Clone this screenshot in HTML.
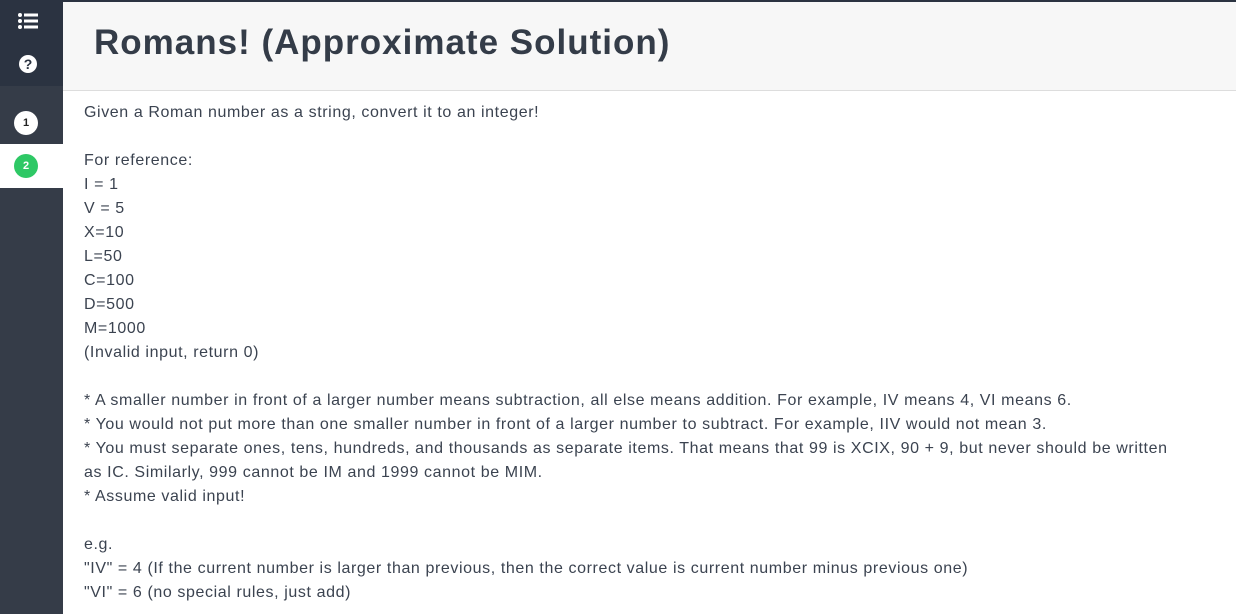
<!DOCTYPE html>
<html><head><style>
body{margin:0;width:1236px;height:614px;overflow:hidden;background:#fff;font-family:"Liberation Sans",sans-serif;position:relative}
.sb{position:absolute;left:0;top:0;width:63px;height:614px;background:#353c48}
.top{position:absolute;left:0;top:0;width:63px;height:86px;background:#2b3341}
.sel{position:absolute;left:0;top:144px;width:63px;height:44px;background:#fff}
.c{position:absolute;border-radius:50%;text-align:center;font-weight:bold}
.hdr{position:absolute;left:63px;top:0;right:0;height:91px;background:#f7f7f7;border-top:2px solid #2b3341;border-bottom:1px solid #ddd;box-sizing:border-box}
h1{margin:0;position:absolute;left:31px;top:21px;font-size:35px;color:#343c48;font-weight:bold;letter-spacing:1px}
.txt{position:absolute;left:84px;top:101px;font-size:16px;line-height:24px;color:#3b4350;white-space:pre-wrap;width:1100px;letter-spacing:0.6px}
</style></head><body>
<div class="sb"></div><div class="top"></div><div class="sel"></div>
<svg style="position:absolute;left:18px;top:12px" width="22" height="18" viewBox="0 0 22 18" fill="#fff"><circle cx="2" cy="3" r="2"/><circle cx="2" cy="9" r="2"/><circle cx="2" cy="15" r="2"/><rect x="6" y="1.5" width="14" height="3"/><rect x="6" y="7.5" width="14" height="3"/><rect x="6" y="13.5" width="14" height="3"/></svg>
<div class="c" style="left:19px;top:55px;width:18px;height:18px;background:#fff;color:#2b3341;font-size:14px;line-height:18px">?</div>
<div class="c" style="left:14px;top:111px;width:24px;height:24px;background:#fff;color:#222;font-size:11px;line-height:24px">1</div>
<div class="c" style="left:14px;top:154px;width:24px;height:24px;background:#2ec865;color:#fff;font-size:11px;line-height:24px">2</div>
<div class="hdr"><h1>Romans! (Approximate Solution)</h1></div>
<div class="txt">Given a Roman number as a string, convert it to an integer!

For reference:
I = 1
V = 5
X=10
L=50
C=100
D=500
M=1000
(Invalid input, return 0)

* A smaller number in front of a larger number means subtraction, all else means addition. For example, IV means 4, VI means 6.
* You would not put more than one smaller number in front of a larger number to subtract. For example, IIV would not mean 3.
* You must separate ones, tens, hundreds, and thousands as separate items. That means that 99 is XCIX, 90 + 9, but never should be written
as IC. Similarly, 999 cannot be IM and 1999 cannot be MIM.
* Assume valid input!

e.g.
"IV" = 4 (If the current number is larger than previous, then the correct value is current number minus previous one)
"VI" = 6 (no special rules, just add)</div>
</body></html>
